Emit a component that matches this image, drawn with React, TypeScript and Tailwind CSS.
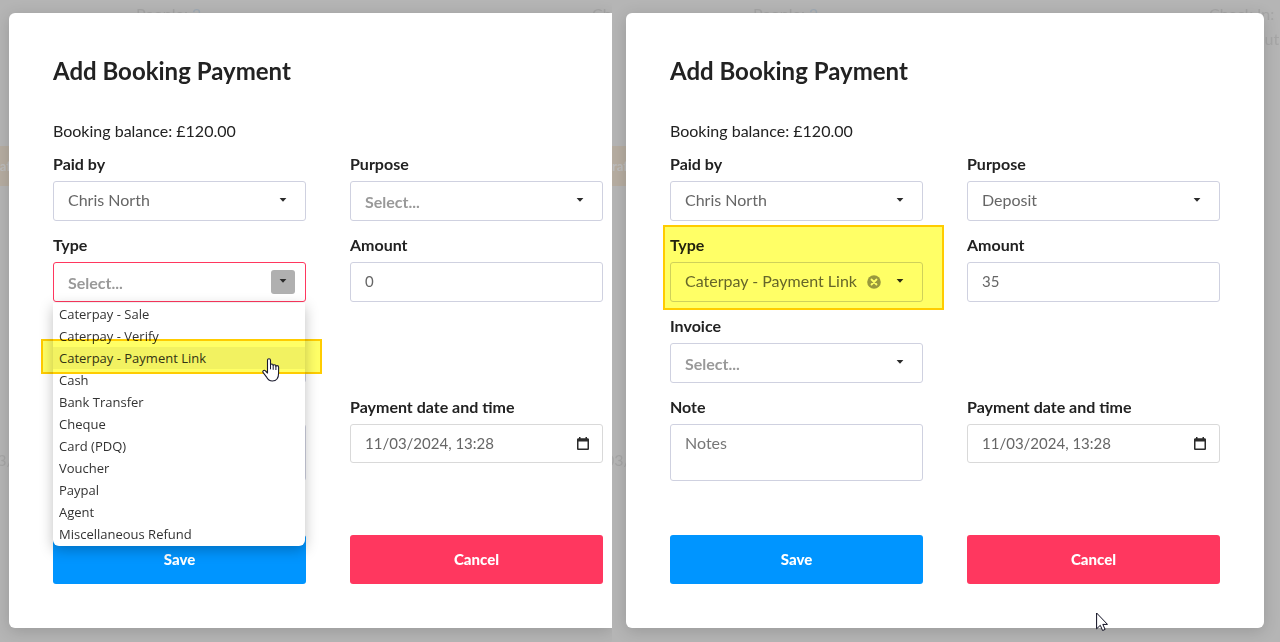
import React, { useState } from 'react';

type FieldKey = 'paidBy' | 'purpose' | 'type' | 'amount' | 'invoice' | 'note' | 'date';
type FormData = Record<FieldKey, string>;

const PAYMENT_TYPES = [
  'Caterpay - Sale',
  'Caterpay - Verify',
  'Caterpay - Payment Link',
  'Cash',
  'Bank Transfer',
  'Cheque',
  'Card (PDQ)',
  'Voucher',
  'Paypal',
  'Agent',
  'Miscellaneous Refund',
];

const CONTROL = 'block w-full rounded-[3px] border bg-white px-[14px] text-[#666] outline-none';

const CaretIcon = () => (
  <svg viewBox="0 0 8 4" className="h-1 w-2" aria-hidden="true">
    <path d="M0.6 0h6.8L4 3.700z" fill="#2b2b2b" />
  </svg>
);

const CalendarIcon = () => (
  <svg viewBox="0 0 14 14" className="h-[14px] w-[14px]" aria-hidden="true">
    <path
      d="M3 0h1.500v1.200h5V0H11v1.200h.7c.7 0 1.300.6 1.300 1.300v9.200c0 .7-.6 1.300-1.300 1.300H2.300C1.600 13 1 12.400 1 11.700V2.500c0-.7.6-1.300 1.300-1.300H3zM2.500 4.400v7.100h9V4.400z"
      fill="#2b2b2b"
      fillRule="evenodd"
    />
  </svg>
);

const ClearIcon = () => (
  <svg viewBox="0 0 14 14" className="h-[14px] w-[14px]" aria-hidden="true">
    <circle cx="7" cy="7" r="6.800" fill="#999" />
    <path d="M4.500 4.500l5 5M9.500 4.500l-5 5" stroke="#fff" strokeWidth="1.800" strokeLinecap="round" />
  </svg>
);

const HandCursor = () => (
  <svg viewBox="0 0 18 24" className="h-6 w-[18px]" aria-hidden="true">
    <path
      d="M5.500 15V2.300C5.500 1.300 6.100.7 7 .7s1.500.6 1.500 1.600v4.500c.3-.6.7-.8 1.300-.8.8 0 1.400.5 1.400 1.400.2-.5.7-.7 1.300-.7.8 0 1.400.5 1.400 1.500.3-.4.7-.6 1.200-.6.900 0 1.500.6 1.500 1.500v6c0 4.800-2.200 7.900-6.200 7.900-3.300 0-4.700-1.500-6-4.200L1 14.400c-.4-1 0-1.700.6-2 .7-.3 1.400-.1 2 .6z"
      fill="#fff"
      stroke="#1a1a2e"
      strokeWidth="1.100"
      strokeLinejoin="round"
    />
    <path d="M8.500 6.500v4.800M11.200 7.200v4.600M13.900 8v4" stroke="#1a1a2e" strokeWidth="1" fill="none" />
  </svg>
);

const ArrowCursor = () => (
  <svg viewBox="0 0 12 19" className="h-[19px] w-3" aria-hidden="true">
    <path d="M.6 1v15.800l3.700-3.500 2.300 5.200 2.500-1.100-2.300-5h4.700z" fill="#fff" stroke="#0d0d1f" strokeWidth="1" strokeLinejoin="round" />
  </svg>
);

interface FieldProps {
  id: string;
  label: string;
  children: React.ReactNode;
}

const Field: React.FC<FieldProps> = ({ id, label, children }) => (
  <div className="relative">
    <label htmlFor={id} className="mb-[6px] block text-base leading-[22px] font-bold text-[#222]">{label}</label>
    {children}
  </div>
);

interface SelectBoxProps {
  id: string;
  value: string;
  options: string[];
  onChange: (value: string) => void;
  open?: boolean;
  clearable?: boolean;
}

const SelectBox: React.FC<SelectBoxProps> = ({ id, value, options, onChange, open, clearable }) => (
  <div className="relative">
    <select
      id={id}
      value={value}
      onChange={e => onChange(e.target.value)}
      className={`${CONTROL} h-10 appearance-none text-base ${open ? 'border-[#ff375f]' : 'border-[#cfd1e0]'} ${value ? 'pb-[2px]' : 'pt-[2px] font-bold text-[#999]'}`}
    >
      <option value="">Select...</option>
      {options.map(option => <option key={option} value={option}>{option}</option>)}
    </select>
    <div className="pointer-events-none absolute inset-y-0 right-[11px] flex items-center gap-[7px]">
      {clearable && value && (
        <button type="button" aria-label="Clear type" onClick={() => onChange('')} className="pointer-events-auto">
          <ClearIcon />
        </button>
      )}
      <span className={`flex h-6 w-6 items-center justify-center rounded-[3px] pb-[2px] ${open ? 'bg-[#b0b0b0]' : ''}`}>
        <CaretIcon />
      </span>
    </div>
  </div>
);

const TypeMenu: React.FC<{ onPick: (value: string) => void }> = ({ onPick }) => (
  <ul
    role="listbox"
    aria-label="Payment types"
    className="absolute inset-x-0 top-full z-10 mt-px mr-px rounded-b-md bg-white pb-px font-['Open_Sans',sans-serif] text-[13px] leading-[22px] text-[#333] shadow-[0_4px_14px_rgba(0,0,0,0.25)]"
  >
    {PAYMENT_TYPES.map(name => {
      const hovered = name === 'Caterpay - Payment Link';
      return (
        <li
          key={name}
          role="option"
          aria-selected={hovered}
          onClick={() => onPick(name)}
          className={`relative px-[6px] ${hovered ? 'bg-[#f2f2f2]' : ''}`}
        >
          {name}
          {hovered && (
            <>
              <span className="absolute -top-2 -right-[17px] -bottom-[5px] -left-3 border-2 border-[#ffcc00] bg-[#ffff66] mix-blend-multiply" />
              <span className="absolute top-[11px] right-[25px]"><HandCursor /></span>
            </>
          )}
        </li>
      );
    })}
  </ul>
);

// Dimmed booking page that shows round the edges of the dialog
const DimmedPage: React.FC<{ className: string }> = ({ className }) => (
  <div aria-hidden="true" className={`absolute inset-y-0 right-0 text-base leading-6 text-[#a6a6a6] ${className}`}>
    <span className="absolute top-[2px] left-[141px]">People: <span className="text-[#a0abb5]">2</span></span>
    <span className="absolute top-[2px] left-[597px] whitespace-nowrap">Check In:</span>
    <span className="absolute top-[27px] left-[592px] whitespace-nowrap">Check Out:</span>
    <span className="absolute top-[146px] left-0 h-10 w-16 bg-[#b6ada1] text-[13px] leading-10 font-bold text-[#bcbcbc]">raft</span>
    <span className="absolute top-[448px] -left-[7px] w-20">03/2024</span>
  </div>
);

interface PaymentDialogProps {
  name: string;
  initial: FormData;
  menuOpen?: boolean;
  className: string;
  children?: React.ReactNode;
}

const PaymentDialog: React.FC<PaymentDialogProps> = ({ name, initial, menuOpen = false, className, children }) => {
  const [formData, setFormData] = useState<FormData>(initial);
  const [isOpen, setIsOpen] = useState(menuOpen);

  const update = (key: FieldKey) => (value: string) => {
    setFormData(prev => ({ ...prev, [key]: value }));
  };

  return (
    <form
      onSubmit={e => e.preventDefault()}
      className={`relative bg-white pt-[41px] pb-11 pl-11 shadow-[0_3px_16px_rgba(0,0,0,0.16)] ${className}`}
    >
      <h1 className="text-2xl leading-[34px] font-bold text-[#222]">Add Booking Payment</h1>
      <p className="mt-8 text-base leading-[22px] text-[#222]">Booking balance: £120.00</p>

      <div className="mt-[11px] grid grid-cols-2 gap-x-11 gap-y-[13px]">
        <Field id={`${name}-paid-by`} label="Paid by">
          <SelectBox id={`${name}-paid-by`} value={formData.paidBy} options={['Chris North']} onChange={update('paidBy')} />
        </Field>
        <Field id={`${name}-purpose`} label="Purpose">
          <SelectBox id={`${name}-purpose`} value={formData.purpose} options={['Deposit']} onChange={update('purpose')} />
        </Field>

        <Field id={`${name}-type`} label="Type">
          <SelectBox id={`${name}-type`} value={formData.type} options={PAYMENT_TYPES} onChange={update('type')} open={isOpen} clearable />
          {isOpen && <TypeMenu onPick={value => { update('type')(value); setIsOpen(false); }} />}
          {!menuOpen && (
            <span className="pointer-events-none absolute -top-[9px] -right-[21px] -bottom-2 -left-[7px] border-2 border-[#ffcc00] bg-[#ffff66] mix-blend-multiply" />
          )}
        </Field>
        <Field id={`${name}-amount`} label="Amount">
          <input
            id={`${name}-amount`}
            type="text"
            value={formData.amount}
            onChange={e => update('amount')(e.target.value)}
            className={`${CONTROL} h-10 border-[#cfd1e0] pb-[2px] text-[15px]`}
          />
        </Field>

        <div className="col-span-2 grid grid-cols-2 gap-x-11">
          <Field id={`${name}-invoice`} label="Invoice">
            <SelectBox id={`${name}-invoice`} value={formData.invoice} options={[]} onChange={update('invoice')} />
          </Field>
        </div>

        <Field id={`${name}-note`} label="Note">
          <textarea
            id={`${name}-note`}
            placeholder="Notes"
            value={formData.note}
            onChange={e => update('note')(e.target.value)}
            className={`${CONTROL} h-[57px] resize-none border-[#cfd1e0] py-[7px] text-base leading-[22px] placeholder:text-[#777]`}
          />
        </Field>
        <Field id={`${name}-date`} label="Payment date and time">
          <div className="relative">
            <input
              id={`${name}-date`}
              type="text"
              value={formData.date}
              onChange={e => update('date')(e.target.value)}
              className={`${CONTROL} h-[39px] border-[#d9d9d9] pb-[2px] text-[15px]`}
            />
            <button type="button" aria-label="Open calendar" className="absolute inset-y-0 right-[13px]"><CalendarIcon /></button>
          </div>
        </Field>
      </div>

      <div className="mt-[54px] grid grid-cols-2 gap-x-11">
        <button type="submit" className="rounded-[3px] bg-[#0095ff] py-3 text-[15px] leading-[25px] font-black text-white">Save</button>
        <button type="button" className="rounded-[3px] bg-[#ff375f] py-3 text-[15px] leading-[25px] font-black text-white">Cancel</button>
      </div>
      {children}
    </form>
  );
};

const BEFORE: FormData = { paidBy: 'Chris North', purpose: '', type: '', amount: '0', invoice: '', note: '', date: '11/03/2024, 13:28' };
const AFTER: FormData = { ...BEFORE, purpose: 'Deposit', type: 'Caterpay - Payment Link', amount: '35' };

const App: React.FC = () => (
  <main className="grid min-h-screen grid-cols-[612fr_668fr] bg-[#b5b5b5] font-[Lato,sans-serif]">
    <section className="relative overflow-hidden pt-[13px] pb-[14px] pl-[9px]">
      <DimmedPage className="-left-[5px]" />
      <PaymentDialog name="before" initial={BEFORE} menuOpen className="rounded-l-md pr-[9px]" />
    </section>
    <section className="relative overflow-hidden pt-[13px] pr-4 pb-[14px] pl-[14px]">
      <DimmedPage className="left-0" />
      <PaymentDialog name="after" initial={AFTER} className="rounded-md pr-11">
        <span className="absolute right-[156px] bottom-[-3px]"><ArrowCursor /></span>
      </PaymentDialog>
    </section>
  </main>
);

export default App;
